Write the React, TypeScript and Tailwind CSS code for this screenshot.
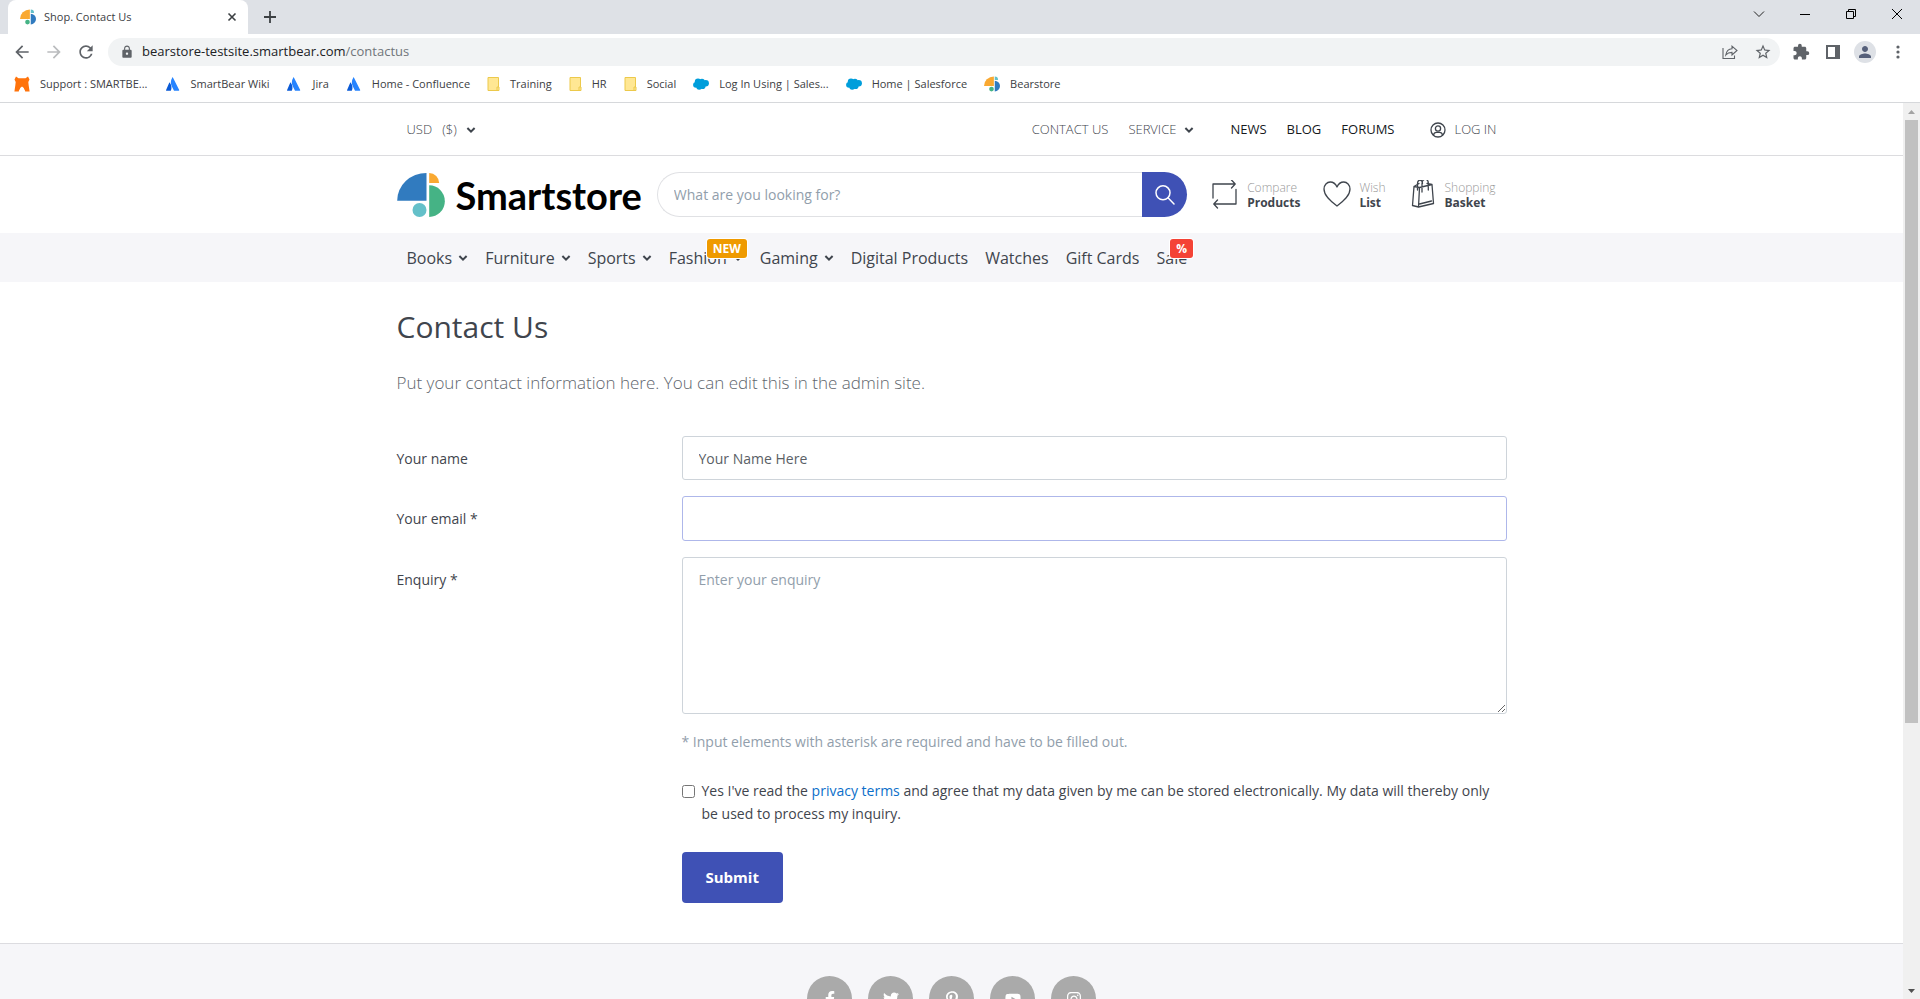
import type { ReactNode } from "react";
import { MdArrowBack, MdArrowForward, MdExtension, MdLock, MdPerson, MdRefresh, MdStarBorder } from "react-icons/md";
import { FaFacebookF, FaInstagram, FaPinterestP, FaTwitter, FaYoutube } from "react-icons/fa";

const BRAND = { a: "#317bbf", b: "#f9a932", c: "#45b385", d: "#64c0c9" };
const FAVICON = { a: "#f9a932", b: "#64c0c9", c: "#317bbf", d: "#45b385" };

function StoreMark({ colors, className }: { colors: typeof BRAND; className: string }) {
  return (
    <svg viewBox="0 0 143 132" className={className} aria-hidden="true">
      <path d="M0 83A88 83 0 0 1 88 0V83Z" fill={colors.a} />
      <path d="M96 0A30 30 0 0 1 126 30H96Z" fill={colors.b} />
      <path d="M96 37A47 47.5 0 0 1 96 132Z" fill={colors.c} />
      <circle cx="67" cy="111" r="21" fill={colors.d} />
    </svg>
  );
}

function Caret() {
  return (
    <svg viewBox="0 0 10 8" className="h-2 w-2.5 shrink-0" aria-hidden="true">
      <path d="M1.4 2 5 5.6 8.6 2" fill="none" stroke="currentColor" strokeWidth="2" />
    </svg>
  );
}

function BearIcon() {
  return (
    <svg viewBox="0 0 16 16" className="size-4" aria-hidden="true">
      <path d="M2 .5 4.500 2.300h7L14 .5l1.500 3L14.300 6l.4 3.500.9 6h-4.400c0-1.500-1.200-2-1.400-3.500L8 10.500 6.200 12c-.2 1.500-1.400 2-1.400 3.500H.4l.9-6L1.700 6 .5 3.500Z" fill="#ff730b" />
    </svg>
  );
}

function AtlassianIcon() {
  return (
    <svg viewBox="0 0 16 16" className="size-4" aria-hidden="true">
      <path d="M4.800 6.800c-.2-.3-.5-.2-.7.1L1 14.200c-.1.300.1.500.4.500h4.400c1.300-2.500.7-5.700-1-7.900Z" fill="#0a5ad6" />
      <path d="M7.300 1.500C5.300 4.700 5.500 8 7 10.800l1.900 3.600c.1.200.2.300.4.300h4.500c.3 0 .5-.3.400-.600L7.900 1.500c-.1-.3-.4-.3-.6 0Z" fill="#2684ff" />
    </svg>
  );
}

function FolderIcon() {
  return (
    <svg viewBox="0 0 13 16" className="h-4 w-[13px]" aria-hidden="true">
      <path d="M1 1.500h10.500v13H1Z" fill="#ffe793" stroke="#ecc94b" />
      <path d="M10 14.500v-3.500h2v3.500Z" fill="#ffe793" stroke="#ecc94b" />
    </svg>
  );
}

function CloudIcon() {
  return (
    <svg viewBox="0 0 16 12" className="h-3 w-4" aria-hidden="true">
      <g fill="#009edb">
        <circle cx="5" cy="3.600" r="3.200" />
        <circle cx="9" cy="3.500" r="2.800" />
        <circle cx="12.700" cy="5.200" r="3.200" />
        <circle cx="3" cy="6.800" r="2.900" />
        <circle cx="6.200" cy="8.800" r="2.900" />
        <circle cx="9.700" cy="8.200" r="2.800" />
        <path d="M4 3h9v5H4Z" />
      </g>
    </svg>
  );
}

const bookmarks: { label: string; icon: ReactNode }[] = [
  { label: "Support : SMARTBE...", icon: <BearIcon /> },
  { label: "SmartBear Wiki", icon: <AtlassianIcon /> },
  { label: "Jira", icon: <AtlassianIcon /> },
  { label: "Home - Confluence", icon: <AtlassianIcon /> },
  { label: "Training", icon: <FolderIcon /> },
  { label: "HR", icon: <FolderIcon /> },
  { label: "Social", icon: <FolderIcon /> },
  { label: "Log In Using | Sales...", icon: <CloudIcon /> },
  { label: "Home | Salesforce", icon: <CloudIcon /> },
  { label: "Bearstore", icon: <StoreMark colors={FAVICON} className="size-4" /> },
];

function BrowserChrome() {
  return (
    <header className="shrink-0 border-b border-[#d6d8db] bg-white text-[#3c4043]">
      <div className="flex h-[34px] items-stretch bg-[#dee1e6] pl-2">
        <div className="flex w-60 items-center rounded-t-lg bg-white pr-2 pl-3">
          <StoreMark colors={FAVICON} className="size-4" />
          <span className="ml-2 flex-1 text-[11px]">Shop. Contact Us</span>
          <button aria-label="Close tab" className="grid size-4 place-items-center">
            <svg viewBox="0 0 10 10" className="size-2.5">
              <path d="M1.500 1.500l7 7m0-7l-7 7" stroke="#3c4043" strokeWidth="1.600" />
            </svg>
          </button>
        </div>
        <button aria-label="New tab" className="ml-4 grid w-3 place-items-center">
          <svg viewBox="0 0 12 12" className="size-3">
            <path d="M6 0v12M0 6h12" stroke="#3c4043" strokeWidth="1.800" />
          </svg>
        </button>
        <div className="mr-4 ml-auto flex items-center gap-8 pb-1.5">
          <button aria-label="Search tabs" className="grid size-3.5 place-items-center">
            <svg viewBox="0 0 12 12" className="size-3"><path d="M1 3.500l5 5 5-5" fill="none" stroke="#222" /></svg>
          </button>
          <button aria-label="Minimize" className="grid size-3.5 place-items-center">
            <svg viewBox="0 0 12 12" className="size-3"><path d="M1 6.500h10" stroke="#000" /></svg>
          </button>
          <button aria-label="Restore" className="grid size-3.5 place-items-center">
            <svg viewBox="0 0 12 12" className="size-3">
              <path d="M1.500 3.500h7v7h-7ZM3.500 3.500v-2h7v7h-2" fill="none" stroke="#000" />
            </svg>
          </button>
          <button aria-label="Close window" className="grid size-3.5 place-items-center">
            <svg viewBox="0 0 12 12" className="size-3"><path d="M1 1l10 10M11 1L1 11" stroke="#000" /></svg>
          </button>
        </div>
      </div>

      <div className="flex h-9 items-center px-3 text-[#5f6368]">
        <button aria-label="Back" className="mr-3"><MdArrowBack className="size-5" /></button>
        <button aria-label="Forward" className="mr-3 text-[#babcbe]"><MdArrowForward className="size-5" /></button>
        <button aria-label="Reload"><MdRefresh className="size-5" /></button>
        <div className="ml-3 flex h-7 flex-1 items-center rounded-full bg-[#f1f3f4] pr-2 pl-3">
          <MdLock className="size-3.5" />
          <div className="ml-2 flex-1 text-[13px]">
            <span className="text-[#202124]">bearstore-testsite.smartbear.com</span>
            <span className="text-[#70757a]">/contactus</span>
          </div>
          <button aria-label="Share" className="mr-4">
            <svg viewBox="0 0 16 16" className="size-4" fill="none" stroke="#5f6368" strokeWidth="1.100">
              <path d="M1 4v10.500h11.500v-3" />
              <path d="M10 2.200v2.600C6.500 5 4.500 7 3.800 11c1.700-2 3.400-2.600 6.200-2.600v2.600l5-4.500Z" />
            </svg>
          </button>
          <button aria-label="Bookmark this page"><MdStarBorder className="size-[18px]" /></button>
        </div>
        <button aria-label="Extensions" className="ml-3"><MdExtension className="size-[18px]" /></button>
        <button aria-label="Side panel" className="ml-4">
          <svg viewBox="0 0 14 14" className="size-3.5">
            <path d="M0 0h14v14H0ZM2 2v10h7V2Z" fill="#5f6368" fillRule="evenodd" />
          </svg>
        </button>
        <button aria-label="Profile" className="ml-3.5 grid size-[22px] place-items-center rounded-full bg-[#dee1e6] text-[#56607a]">
          <MdPerson className="size-[18px]" />
        </button>
        <button aria-label="Menu" className="ml-3 grid size-5 place-items-center">
          <svg viewBox="0 0 4 14" className="h-3.5 w-1" fill="#5f6368">
            <circle cx="2" cy="2" r="1.600" /><circle cx="2" cy="7" r="1.600" /><circle cx="2" cy="12" r="1.600" />
          </svg>
        </button>
      </div>

      <nav aria-label="Bookmarks" className="flex h-8 items-center gap-[17px] pb-1 pl-3.5 text-[11px]">
        {bookmarks.map((b) => (
          <a key={b.label} href="#" className="flex items-center gap-2.5 whitespace-nowrap">
            {b.icon}
            {b.label}
          </a>
        ))}
      </nav>
    </header>
  );
}

function TopBar() {
  return (
    <div className="border-b border-[#dcdcdf]">
      <div className="mx-auto flex h-[52px] max-w-[1140px] items-center px-[25px] pt-0.5 text-[13px] font-light text-[#3f454d]">
        <div className="flex items-center gap-2">
          <select aria-label="Currency" className="appearance-none bg-transparent">
            <option>USD&nbsp;&nbsp;&nbsp;($)</option>
          </select>
          <Caret />
        </div>
        <a href="#" className="ml-auto">CONTACT US</a>
        <button className="ml-5 flex items-center gap-2">SERVICE <Caret /></button>
        <div className="ml-9 flex gap-5 font-normal text-[#16191d]">
          <a href="#">NEWS</a>
          <a href="#">BLOG</a>
          <a href="#">FORUMS</a>
        </div>
        <a href="#" className="ml-9 flex items-center gap-2">
          <svg viewBox="0 0 16 16" className="size-4" fill="none" stroke="currentColor" strokeWidth="1.300" aria-hidden="true">
            <circle cx="8" cy="8" r="7" />
            <circle cx="8" cy="6.500" r="2.600" />
            <path d="M3.500 13c.4-2 1.800-2.600 3-2.600h3c1.200 0 2.600.6 3 2.600" />
          </svg>
          LOG IN
        </a>
      </div>
    </div>
  );
}

function Tool({ top, bottom, children }: { top: string; bottom: string; children: ReactNode }) {
  return (
    <a href="#" className="flex items-center gap-2 text-xs leading-[15px] text-[#3f454d]">
      <svg viewBox="0 2 28 30" className="h-[30px] w-7" fill="none" stroke="currentColor" strokeWidth="1.300" strokeLinecap="round" strokeLinejoin="round" aria-hidden="true">
        {children}
      </svg>
      <span>
        <span className="block font-light text-[#999]">{top}</span>
        <span className="block font-bold">{bottom}</span>
      </span>
    </a>
  );
}

function ShopHeader() {
  return (
    <div className="mx-auto flex h-[77px] max-w-[1140px] items-center px-[15px]">
      <a href="#" className="flex shrink-0 items-center">
        <StoreMark colors={BRAND} className="h-11 w-12" />
        <span className="ml-[11px] font-['Lato'] text-[38px] leading-none font-bold text-black">Smartstore</span>
      </a>
      <form className="ml-[15px] flex h-[45px] flex-1" onSubmit={(e) => e.preventDefault()}>
        <input
          type="search"
          aria-label="Search"
          placeholder="What are you looking for?"
          className="min-w-0 flex-1 rounded-l-full border border-r-0 border-[#e0e1e4] pl-4 text-sm outline-none placeholder:text-[#919eab]"
        />
        <button aria-label="Search" className="grid w-[45px] place-items-center rounded-r-full bg-[#3f51b5]">
          <svg viewBox="0 0 20 20" className="size-5" fill="none" stroke="#fff" strokeWidth="1.500" strokeLinecap="round">
            <circle cx="8" cy="7.800" r="7" />
            <path d="M13 12.800l6 6.200" />
          </svg>
        </button>
      </form>
      <div className="ml-6 flex gap-[23px] pr-[11px]">
        <Tool top="Compare" bottom="Products">
          <path d="M2 19V5h22M20.500 1l3.700 4-3.700 4M25 10.500V25H3M6.500 21L2.800 25l3.700 4" transform="translate(0 1)" />
        </Tool>
        <Tool top="Wish" bottom="List">
          <path d="M14 28C8 23.500 1 18 1 11 1 7 4 4 7.200 4c3.300 0 5.600 2.300 6.800 5 1.200-2.700 3.500-5 6.800-5C24 4 27 7 27 11 27 18 20 23.500 14 28Z" />
        </Tool>
        <Tool top="Shopping" bottom="Basket">
          <path d="M5 8.500L3.500 27.500l6 1.500L24.500 25.500 23 6.500 10.500 9.500ZM10.500 9.500L9.500 29M5 8.500l5-3M10.500 26l12-3M18 5.500l5 1M8.500 12V5.500c0-4.500 5-4.500 5 0M13 14V5.500c.4-5.500 6.300-5.500 6.300-.5v7" />
        </Tool>
      </div>
    </div>
  );
}

const categories: { label: string; menu?: boolean; badge?: string; badgeClass?: string }[] = [
  { label: "Books", menu: true },
  { label: "Furniture", menu: true },
  { label: "Sports", menu: true },
  { label: "Fashion", menu: true, badge: "NEW", badgeClass: "bg-[#ef9a00] -right-1" },
  { label: "Gaming", menu: true },
  { label: "Digital Products" },
  { label: "Watches" },
  { label: "Gift Cards" },
  { label: "Sale", badge: "%", badgeClass: "bg-[#f44336] -right-1.5" },
];

function CategoryNav() {
  return (
    <nav aria-label="Categories" className="bg-[#f6f6f9]">
      <ul className="mx-auto flex h-[49px] max-w-[1140px] items-center gap-[17px] px-[25px] text-base font-medium text-[#3f454d]">
        {categories.map((c) => (
          <li key={c.label} className="relative">
            <a href="#" className="flex items-center gap-1.5 whitespace-nowrap">
              {c.label}
              {c.menu && <Caret />}
            </a>
            {c.badge && (
              <span className={`absolute -top-[7px] rounded-[3px] px-1.5 text-xs leading-[19px] font-bold text-white ring-1 ring-white ${c.badgeClass}`}>
                {c.badge}
              </span>
            )}
          </li>
        ))}
      </ul>
    </nav>
  );
}

const rowClass = "grid grid-cols-[285px_1fr]";
const fieldClass = "w-full rounded-[3px] border border-[#ced4da] bg-white px-4 text-sm text-[#5a6066] outline-none placeholder:text-[#919eab]";
const labelClass = "pt-[13px] text-sm font-medium";

function ContactForm() {
  return (
    <main className="mx-auto max-w-[1140px] px-[15px] pt-[25px] text-[#3f454d]">
      <h1 className="text-[30px] leading-10 font-normal">Contact Us</h1>
      <p className="mt-6 text-[17px] leading-6 font-light text-[#60666d]">
        Put your contact information here. You can edit this in the admin site.
      </p>
      <form className="mt-[41px] flex flex-col gap-4" onSubmit={(e) => e.preventDefault()}>
        <div className={rowClass}>
          <label htmlFor="name" className={labelClass}>Your name</label>
          <input id="name" defaultValue="Your Name Here" className={`h-11 ${fieldClass}`} />
        </div>
        <div className={rowClass}>
          <label htmlFor="email" className={labelClass}>Your email *</label>
          <input id="email" type="email" className="h-[45px] w-full rounded-[3px] border border-[#aeb7ea] bg-white px-4 text-sm outline-none" />
        </div>
        <div className={rowClass}>
          <label htmlFor="enquiry" className={labelClass}>Enquiry *</label>
          <textarea id="enquiry" placeholder="Enter your enquiry" className={`block h-[157px] resize-y py-3 ${fieldClass}`} />
        </div>
        <div className="ml-[285px] text-sm">
          <p className="leading-6 text-[#919eab]">* Input elements with asterisk are required and have to be filled out.</p>
          <div className="mt-[25px] flex gap-[7px] leading-[23px]">
            <input id="privacy" type="checkbox" className="mt-1.5 size-[13px] shrink-0" />
            <label htmlFor="privacy">
              Yes I've read the <a href="#" className="text-[#0b6fca]">privacy terms</a> and agree that my data given by me can be stored electronically. My data will thereby only be used to process my inquiry.
            </label>
          </div>
          <button type="submit" className="mt-[27px] h-[51px] rounded bg-[#3f51b5] px-6 text-[15px] font-bold text-white">Submit</button>
        </div>
      </form>
    </main>
  );
}

const social = [
  { name: "Facebook", Icon: FaFacebookF },
  { name: "Twitter", Icon: FaTwitter },
  { name: "Pinterest", Icon: FaPinterestP },
  { name: "YouTube", Icon: FaYoutube },
  { name: "Instagram", Icon: FaInstagram },
];

function Footer() {
  return (
    <footer className="mt-10 border-t border-[#dcdce0] bg-[#f6f6f9] pt-8 pb-8">
      <div className="flex justify-center gap-4">
        {social.map(({ name, Icon }) => (
          <a key={name} href="#" aria-label={name} className="grid size-[45px] place-items-center rounded-full bg-[#aaa] text-white">
            <Icon className="size-4" />
          </a>
        ))}
      </div>
    </footer>
  );
}

function Scrollbar() {
  return (
    <div aria-hidden="true" className="flex w-[17px] shrink-0 flex-col items-center bg-[#f0f0f0]">
      <svg viewBox="0 0 17 17" className="size-[17px] shrink-0"><path d="M5 11l3.500-4 3.500 4Z" fill="#a3a3a3" /></svg>
      <div className="w-full flex-1 px-0.5"><div className="h-[70%] bg-[#c1c1c1]" /></div>
      <svg viewBox="0 0 17 17" className="size-[17px] shrink-0"><path d="M5 7l3.500 4 3.500-4Z" fill="#505050" /></svg>
    </div>
  );
}

export default function App() {
  return (
    <div className="flex h-screen flex-col overflow-hidden bg-white font-['Open_Sans','Noto_Sans',sans-serif]">
      <BrowserChrome />
      <div className="flex min-h-0 flex-1">
        <div className="min-w-0 flex-1 overflow-hidden">
          <TopBar />
          <ShopHeader />
          <CategoryNav />
          <ContactForm />
          <Footer />
        </div>
        <Scrollbar />
      </div>
    </div>
  );
}
